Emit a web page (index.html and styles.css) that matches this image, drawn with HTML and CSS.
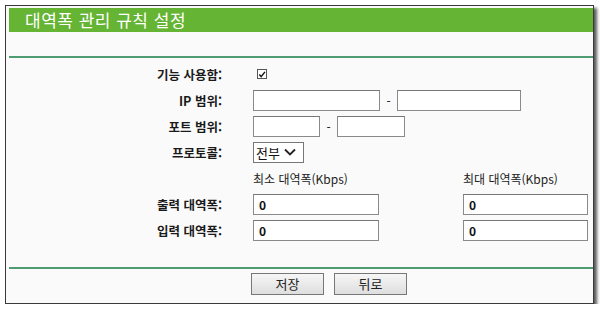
FILE: index.html
```html
<!DOCTYPE html>
<html lang="ko">
<head>
<meta charset="utf-8">
<link rel="stylesheet" href="styles.css">
</head>
<body>
<div class="frame">
  <div class="title">대역폭 관리 규칙 설정</div>
  <div class="band"></div>
  <div class="form">
    <div class="label">기능 사용함:</div>
    <div class="field"><span class="check"><svg width="9" height="9" viewBox="0 0 9 9"><path d="M1.5 4.5 L3.6 7 L7.8 1.5" fill="none" stroke="#111" stroke-width="1.6"/></svg></span></div>

    <div class="label">IP 범위:</div>
    <div class="field"><span class="inp w127"></span><span class="dash">-</span><span class="inp w124"></span></div>

    <div class="label">포트 범위:</div>
    <div class="field"><span class="inp w67"></span><span class="dash">-</span><span class="inp w68"></span></div>

    <div class="label">프로토콜:</div>
    <div class="field"><span class="select">전부<svg width="12" height="8" viewBox="0 0 12 8"><path d="M1 1.5 L6 6.5 L11 1.5" fill="none" stroke="#222" stroke-width="1.8"/></svg></span></div>

    <div class="label"></div>
    <div class="field cols"><span class="head">최소 대역폭(Kbps)</span><span class="head">최대 대역폭(Kbps)</span></div>

    <div class="label">출력 대역폭:</div>
    <div class="field cols"><span class="inp w126">0</span><span class="inp w126">0</span></div>

    <div class="label">입력 대역폭:</div>
    <div class="field cols"><span class="inp w126">0</span><span class="inp w126">0</span></div>
  </div>
  <div class="footer">
    <span class="btn">저장</span>
    <span class="btn">뒤로</span>
  </div>
</div>
</body>
</html>
```

FILE: styles.css
```css
html, body {
  margin: 0;
  padding: 0;
  background: #fff;
}
body {
  font-family: "Noto Sans CJK KR", "Noto Sans", sans-serif;
  color: #111;
}
.frame {
  margin: 5px 0 0 5px;
  width: 587px;
  height: 297px;
  border: 1px solid #3a3a3a;
  background: #fafafa;
  box-shadow: 3px 3px 3px rgba(0,0,0,0.65);
  padding: 2px 0 0 3px;
  box-sizing: border-box;
  width: 589px;
  height: 299px;
  display: flex;
  flex-direction: column;
}
.title {
  height: 24px;
  background: #66b434;
  color: #fff;
  font-size: 17px;
  line-height: 24px;
  padding-left: 16px;
  letter-spacing: 0.5px;
}
.band {
  height: 24px;
  border-bottom: 2px solid #4e9d72;
}
.form {
  display: grid;
  grid-template-columns: 213px 1fr;
  grid-auto-rows: 26px;
  column-gap: 31px;
  padding-top: 3px;
}
.label {
  text-align: right;
  font-weight: bold;
  font-size: 12.5px;
  display: flex;
  align-items: center;
  justify-content: flex-end;
  color: #1a1a1a;
}
.field {
  display: flex;
  align-items: center;
}
.check {
  width: 10px;
  height: 10px;
  border: 1px solid #555;
  background: #fff;
  margin-left: 4px;
  display: flex;
  align-items: center;
  justify-content: center;
  box-sizing: border-box;
}
.inp {
  height: 21px;
  box-sizing: border-box;
  border: 1px solid #8a8a8a;
  border-top-color: #777;
  background: #fff;
  font-size: 12px;
  font-weight: bold;
  line-height: 19px;
  padding-left: 5px;
}
.w127 { width: 127px; }
.w124 { width: 124px; }
.w67 { width: 67px; }
.w68 { width: 68px; }
.w126 { width: 126px; }
.dash {
  width: 17px;
  text-align: center;
  font-size: 12px;
}
.select {
  height: 21px;
  width: 51px;
  box-sizing: border-box;
  border: 1px solid #777;
  background: #fff;
  font-size: 13px;
  display: flex;
  align-items: center;
  gap: 4px;
  padding-left: 2px;
}
.cols {
  gap: 84px;
}
.head {
  font-size: 12px;
  width: 126px;
  color: #222;
}
.cols .inp + .inp { width: 125px; }
.footer {
  margin-top: 24px;
  border-top: 2px solid #4e9d72;
  display: flex;
  gap: 10px;
  padding: 4px 0 0 242px;
}
.btn {
  width: 73px;
  height: 22px;
  box-sizing: border-box;
  border: 1px solid #777;
  background: linear-gradient(#f6f6f6, #dedede);
  font-size: 13px;
  text-align: center;
  line-height: 20px;
  color: #222;
}
```
